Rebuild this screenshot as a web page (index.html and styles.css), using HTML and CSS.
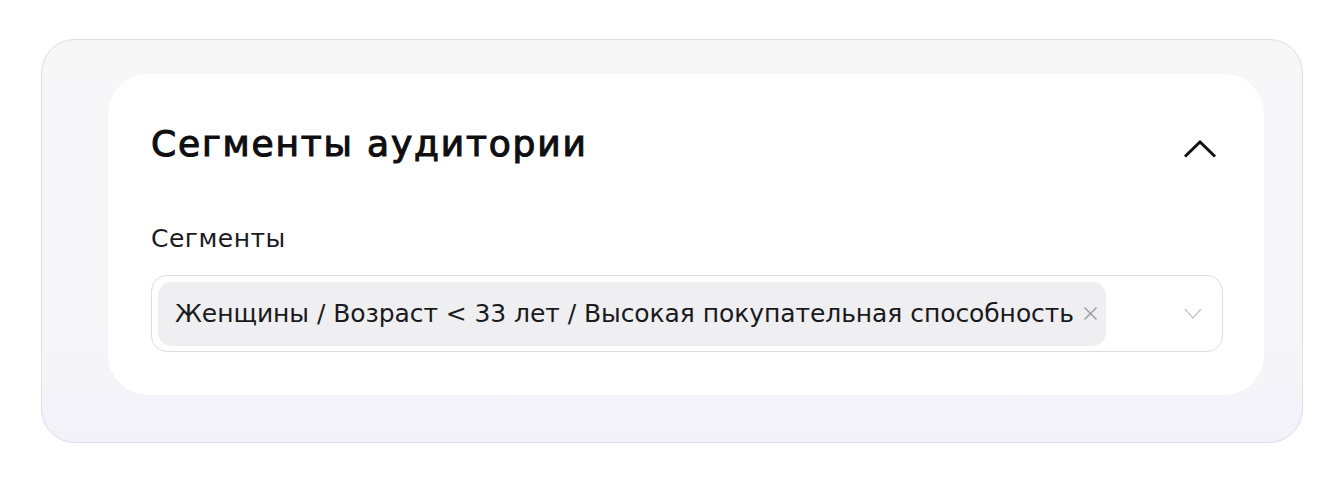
FILE: index.html
```html
<!DOCTYPE html>
<html lang="ru">
<head>
<meta charset="utf-8">
<title>Сегменты аудитории</title>
<link rel="stylesheet" href="styles.css">
</head>
<body>
<div class="page">
  <section class="panel">
    <div class="card">
      <div class="card-head">
        <h2 class="card-title">Сегменты аудитории</h2>
        <button class="collapse" type="button" aria-label="Свернуть">
          <svg width="34" height="18" viewBox="0 0 34 18"><path d="M2 16.5 L17 2 L32 16.5" fill="none" stroke="#111" stroke-width="3"/></svg>
        </button>
      </div>
      <div class="field">
        <div class="field-label">Сегменты</div>
        <div class="select">
          <div class="chip">
            <span class="chip-text">Женщины / Возраст &lt; 33 лет / Высокая покупательная способность</span>
            <svg class="chip-close" width="15" height="15" viewBox="0 0 15 15"><path d="M1.5 1.5 L13.5 13.5 M13.5 1.5 L1.5 13.5" stroke="#a0a0a8" stroke-width="1.6"/></svg>
          </div>
          <svg class="select-arrow" width="18" height="11" viewBox="0 0 18 11"><path d="M1 1 L9 10 L17 1" fill="none" stroke="#c8c8cf" stroke-width="1.5"/></svg>
        </div>
      </div>
    </div>
  </section>
</div>
</body>
</html>
```
FILE: styles.css
```css
* { box-sizing: border-box; }

html, body {
  margin: 0;
  background: #ffffff;
}

body {
  font-family: "DejaVu Sans", "Noto Sans", sans-serif;
  color: #111113;
}

.page {
  padding: 39px 41px 0 41px;
}

.panel {
  width: 1262px;
  height: 404px;
  padding: 34px 38px 47px 66px;
  border: 1px solid #dedde6;
  border-radius: 34px;
  background: linear-gradient(180deg, #f7f7f8 0%, #f6f6f9 70%, #f3f2f9 100%);
}

.card {
  height: 321px;
  padding: 50px 41px 0 43px;
  background: #ffffff;
  border-radius: 40px;
}

.card-head {
  display: flex;
  align-items: center;
  justify-content: space-between;
  height: 40px;
}

.card-title {
  margin: 0;
  font-size: 36px;
  line-height: 40px;
  font-weight: 400;
  letter-spacing: 1.8px;
  -webkit-text-stroke: 1.1px #0f0f11;
  color: #0f0f11;
}

.collapse {
  display: flex;
  padding: 0;
  margin: 9px 6px 0 0;
  border: 0;
  background: none;
}

.field-label {
  margin-top: 60px;
  margin-bottom: 21px;
  font-size: 25px;
  line-height: 30px;
  letter-spacing: 0.5px;
  color: #1b1b1f;
}

.select {
  display: flex;
  align-items: center;
  height: 77px;
  padding: 0 20px 0 6px;
  border: 1px solid #dcdce2;
  border-radius: 16px;
}

.chip {
  display: flex;
  align-items: center;
  gap: 9px;
  height: 64px;
  padding: 0 8px 0 17px;
  background: #efeff1;
  border-radius: 14px;
}

.chip-text {
  font-size: 25px;
  line-height: 30px;
  letter-spacing: -0.07px;
  color: #1a1a1d;
}

.chip-close {
  display: block;
}

.select-arrow {
  margin-left: auto;
}
```
